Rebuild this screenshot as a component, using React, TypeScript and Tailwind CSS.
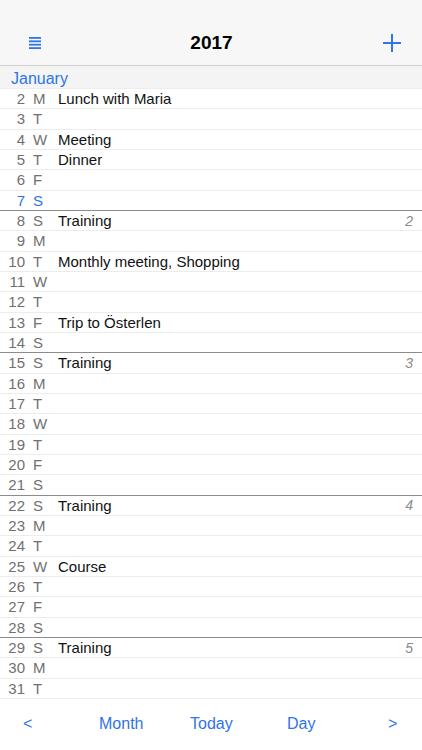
import React from 'react'

type Day = { d: number; w: string; ev?: string; week?: number; today?: boolean }

const days: Day[] = [
  { d: 2, w: 'M', ev: 'Lunch with Maria' },
  { d: 3, w: 'T' },
  { d: 4, w: 'W', ev: 'Meeting' },
  { d: 5, w: 'T', ev: 'Dinner' },
  { d: 6, w: 'F' },
  { d: 7, w: 'S', today: true },
  { d: 8, w: 'S', ev: 'Training', week: 2 },
  { d: 9, w: 'M' },
  { d: 10, w: 'T', ev: 'Monthly meeting, Shopping' },
  { d: 11, w: 'W' },
  { d: 12, w: 'T' },
  { d: 13, w: 'F', ev: 'Trip to Österlen' },
  { d: 14, w: 'S' },
  { d: 15, w: 'S', ev: 'Training', week: 3 },
  { d: 16, w: 'M' },
  { d: 17, w: 'T' },
  { d: 18, w: 'W' },
  { d: 19, w: 'T' },
  { d: 20, w: 'F' },
  { d: 21, w: 'S' },
  { d: 22, w: 'S', ev: 'Training', week: 4 },
  { d: 23, w: 'M' },
  { d: 24, w: 'T' },
  { d: 25, w: 'W', ev: 'Course' },
  { d: 26, w: 'T' },
  { d: 27, w: 'F' },
  { d: 28, w: 'S' },
  { d: 29, w: 'S', ev: 'Training', week: 5 },
  { d: 30, w: 'M' },
  { d: 31, w: 'T' },
]

function Row({ day }: { day: Day }) {
  const sun = day.week !== undefined
  return (
    <div
      className={
        'flex h-[20.33px] items-center border-t text-[15px] leading-none ' +
        (sun ? 'border-[#8c8c8c]' : 'border-[#ececec]')
      }
    >
      <span className={'w-[25px] text-right ' + (day.today ? 'text-[#2f74e8]' : 'text-[#707070]')}>{day.d}</span>
      <span className={'ml-[8px] w-[25px] ' + (day.today ? 'text-[#2f74e8]' : 'text-[#707070]')}>{day.w}</span>
      <span className="flex-1 text-[#111]">{day.ev}</span>
      {sun && <span className="mr-[9px] text-[14px] italic text-[#8a8a8a]">{day.week}</span>}
    </div>
  )
}

export default function App() {
  return (
    <div className="flex h-[750px] w-[422px] flex-col bg-white font-['Liberation_Sans',Arial,sans-serif]">
      <header className="flex h-[66px] shrink-0 items-end border-b border-[#cfcfcf] bg-[#f7f7f7] pb-[8px]">
        <div className="flex w-full items-center justify-between px-[29px] pr-[20px]">
          <svg width="12" height="12" viewBox="0 0 12 12">
            <g fill="#2f74e8">
              <rect x="0" y="0" width="12" height="1.8" />
              <rect x="0" y="3.4" width="12" height="1.8" />
              <rect x="0" y="6.8" width="12" height="1.8" />
              <rect x="0" y="10.2" width="12" height="1.8" />
            </g>
          </svg>
          <span className="text-[19px] font-bold text-black">2017</span>
          <svg width="20" height="20" viewBox="0 0 20 20">
            <path d="M10 1v18M1 10h18" stroke="#2f74e8" strokeWidth="2" />
          </svg>
        </div>
      </header>
      <div className="flex h-[22px] shrink-0 items-center bg-[#f4f4f4] pl-[11px] pt-[3px] text-[16px] leading-none text-[#2f74e8]">January</div>
      <div className="shrink-0">
        {days.map((d) => (
          <Row key={d.d} day={d} />
        ))}
      </div>
      <footer className="relative flex flex-1 items-center border-t border-[#ececec] text-[16px] text-[#2f74e8]">
        <span className="absolute left-[23px]">&lt;</span>
        <span className="absolute left-[99px]">Month</span>
        <span className="absolute left-[190px]">Today</span>
        <span className="absolute left-[287px]">Day</span>
        <span className="absolute left-[388px]">&gt;</span>
      </footer>
    </div>
  )
}
